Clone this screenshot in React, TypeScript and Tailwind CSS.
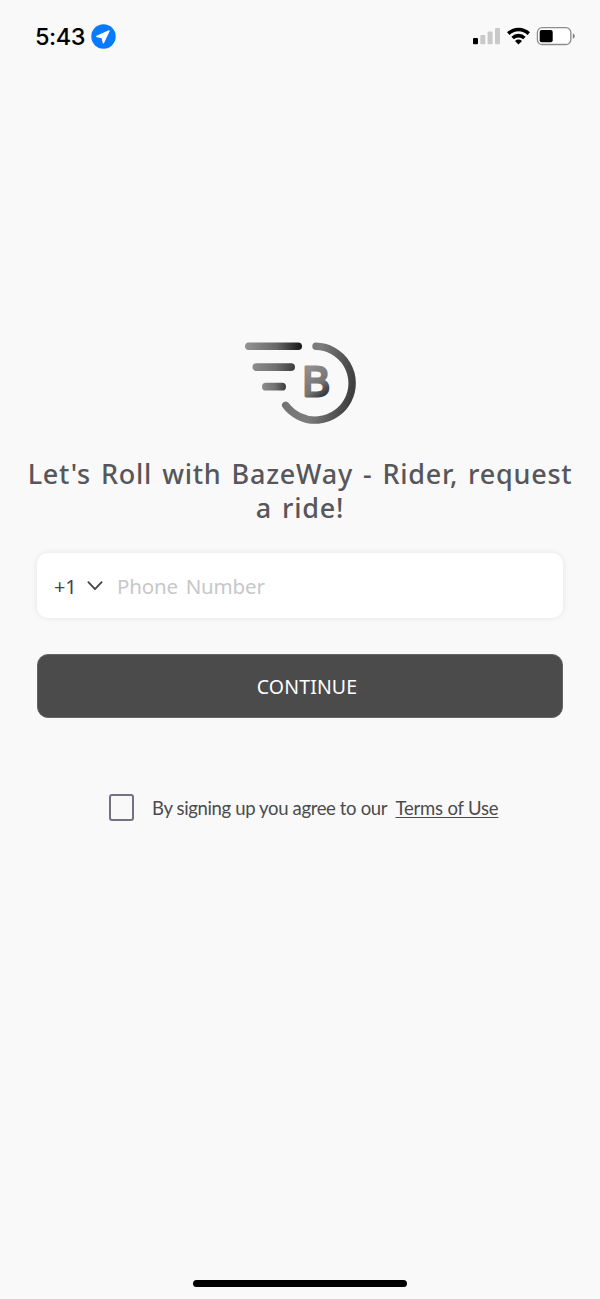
function StatusBar() {
  return (
    <header className="flex h-[72px] items-center justify-between pl-[35px] pr-[24px]">
      <div className="flex items-center gap-[5px]">
        <span className="w-[51px] whitespace-nowrap pt-[2px] font-['Inter',sans-serif] text-[23.5px] font-medium leading-[30px] tracking-[-0.45px] text-black">
          5:43
        </span>
        <svg width="25" height="25" viewBox="0 0 25 25" aria-hidden="true">
          <circle cx="12.5" cy="12.5" r="12.2" fill="#077bfb" />
          <path d="M18 6.9 5.8 12.5l5.4 1.1 1.2 5.2z" fill="#fff" stroke="#fff" strokeWidth="1.4" strokeLinejoin="round" />
        </svg>
      </div>
      <svg width="103" height="20" viewBox="0 0 103 20" aria-hidden="true">
        <rect x="0" y="12" width="5" height="6.3" rx="1" fill="#000" />
        <rect x="7.3" y="9" width="5" height="9.3" rx="1" fill="#c9c9c9" />
        <rect x="14.6" y="5.5" width="5" height="12.8" rx="1" fill="#c9c9c9" />
        <rect x="22" y="2" width="5" height="16.3" rx="1" fill="#c9c9c9" />
        <g fill="none" stroke="#000" strokeWidth="3.6">
          <path d="M35.3 7.6a14.6 14.6 0 0 1 20.4 0" />
          <path d="M39.6 12a8.6 8.6 0 0 1 11.8 0" />
        </g>
        <path d="M42 15q3.5-2.8 7 0l-3.5 3.5z" fill="#000" />
        <rect x="64.4" y="1.7" width="33.4" height="16.8" rx="4.8" fill="#fff" stroke="#8c8c8c" strokeWidth="1.3" />
        <rect x="66.7" y="4" width="13" height="12.2" rx="2" fill="#000" />
        <path d="M99.8 7.3q4.2 2.8 0 5.6z" fill="#808080" />
      </svg>
    </header>
  );
}

function Logo() {
  return (
    <svg className="mx-auto block" width="112" height="84" viewBox="245 341 112 84" role="img" aria-label="BazeWay">
      <defs>
        <linearGradient id="bar" x1="0" y1="0" x2="1" y2="0">
          <stop offset="0" stopColor="#949494" />
          <stop offset="0.55" stopColor="#686868" />
          <stop offset="1" stopColor="#161616" />
        </linearGradient>
        <linearGradient id="bar-short" x1="0" y1="0" x2="1" y2="0">
          <stop offset="0" stopColor="#8d8d8d" />
          <stop offset="0.55" stopColor="#707070" />
          <stop offset="1" stopColor="#3c3c3c" />
        </linearGradient>
        <linearGradient id="ring" gradientUnits="userSpaceOnUse" x1="285" y1="370" x2="353" y2="382">
          <stop offset="0" stopColor="#707070" />
          <stop offset="0.45" stopColor="#7d7d7d" />
          <stop offset="1" stopColor="#404040" />
        </linearGradient>
        <linearGradient id="letter" gradientUnits="userSpaceOnUse" x1="3" y1="-30" x2="27" y2="0">
          <stop offset="0.1" stopColor="#8e8e8e" />
          <stop offset="0.6" stopColor="#757575" />
          <stop offset="0.95" stopColor="#303030" />
        </linearGradient>
      </defs>
      <rect x="245" y="342.5" width="57" height="7.6" rx="3.8" fill="url(#bar)" />
      <rect x="252.5" y="363.2" width="42.5" height="7.8" rx="3.9" fill="url(#bar-short)" />
      <rect x="262" y="382.8" width="24" height="7.8" rx="3.9" fill="url(#bar-short)" />
      <path d="M316 346.3a36.9 36.9 0 1 1-30.3 59" fill="none" stroke="url(#ring)" strokeWidth="7.4" strokeLinecap="round" />
      <text
        transform="translate(302.5 396.3) scale(0.96 1)"
        fontFamily="Liberation Sans, Arial, sans-serif"
        fontSize="43"
        fill="url(#letter)"
        stroke="url(#letter)"
        strokeWidth="2.8"
        strokeLinejoin="round"
      >
        B
      </text>
    </svg>
  );
}

export default function App() {
  return (
    <div className="flex h-[1299px] w-[600px] flex-col overflow-hidden bg-[#f9f9f9] font-['Noto_Sans',sans-serif]">
      <StatusBar />
      <main className="flex flex-1 flex-col pt-[269px]">
        <div className="pl-[2px]">
          <Logo />
        </div>
        <h1 className="mt-[32px] whitespace-nowrap text-center text-[27px] font-medium leading-[34px] tracking-[0.75px] [word-spacing:2.3px] text-[#56565b]">
          Let's Roll with BazeWay - Rider, request
          <br />a ride!
        </h1>
        <div className="mx-[37px] mt-[28px] flex h-[65px] items-center rounded-[11px] bg-white pl-[17px] shadow-[0_0_6px_rgba(0,0,0,0.09)]">
          <button className="flex items-center text-[20px] text-[#444]">
            <span className="w-[33px] pt-[2px] text-left tracking-[-0.3px]">+1</span>
            <svg width="16" height="10" viewBox="0 0 16 10" fill="none" stroke="#444" strokeWidth="1.8" strokeLinecap="round" strokeLinejoin="round" aria-hidden="true">
              <path d="m1.4 1.2 6.6 6.9 6.6-6.9" />
            </svg>
          </button>
          <input
            className="ml-[14px] w-[400px] bg-transparent pt-[2px] text-[20.5px] tracking-[-0.15px] [word-spacing:2.5px] outline-none placeholder:text-[#c7c7c9]"
            placeholder="Phone Number"
            type="tel"
          />
        </div>
        <button className="mx-[37px] mt-[36px] flex h-[64px] items-center justify-center rounded-[11px] border border-[#656565] bg-[#4b4b4b] pl-[14px] pt-[2px] text-[19.5px] tracking-[0.15px] text-white">
          CONTINUE
        </button>
        <div className="mt-[76px] flex h-[28px] items-center pl-[109px] font-['Lato',sans-serif] text-[18.5px] text-[#4b4b4b]">
          <span role="checkbox" aria-checked="false" className="mb-[1px] h-[27px] w-[25px] rounded-[3px] border-2 border-[#727280]" />
          <span className="ml-[18px] w-[243.5px] whitespace-nowrap pt-[2px] tracking-[-0.35px]">By signing up you agree to our</span>
          <a className="whitespace-nowrap pt-[2px] tracking-[-0.2px] underline decoration-1 underline-offset-2">Terms of Use</a>
        </div>
      </main>
      <div className="mx-auto mb-[12px] h-[7px] w-[214px] rounded-full bg-black" />
    </div>
  );
}
